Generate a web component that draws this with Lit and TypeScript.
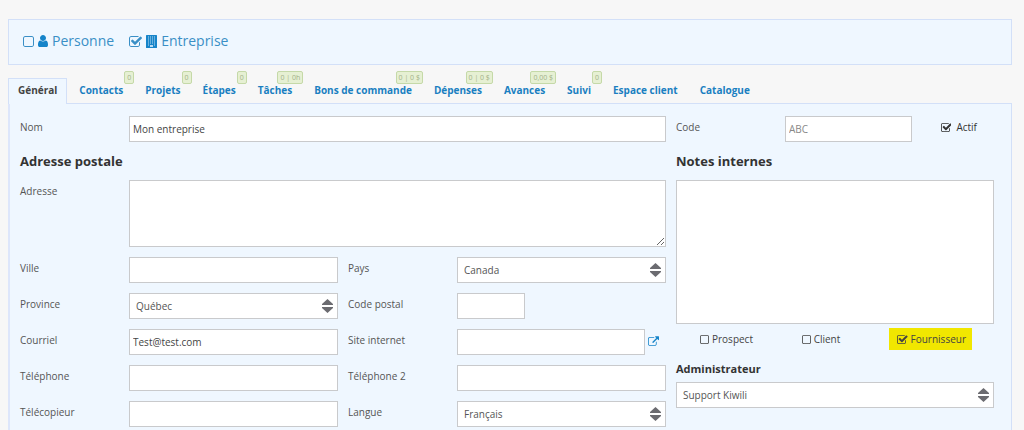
import { LitElement, html, css, svg, nothing } from "lit";
import { customElement, property } from "lit/decorators.js";

const PATHS = {
  square:
    "M1312 256h-832q-66 0-113 47t-47 113v832q0 66 47 113t113 47h832q66 0 113-47t47-113v-832q0-66-47-113t-113-47zm288 160v832q0 119-84.5 203.5t-203.5 84.5h-832q-119 0-203.5-84.5t-84.5-203.5v-832q0-119 84.5-203.5t203.5-84.5h832q119 0 203.5 84.5t84.5 203.5z",
  check:
    "M1472 930v318q0 119-84.5 203.5t-203.5 84.5h-832q-119 0-203.5-84.5t-84.5-203.5v-832q0-119 84.5-203.5t203.5-84.5h832q63 0 117 25 15 7 18 23 3 17-9 29l-49 49q-10 10-23 10-3 0-9-2-23-6-45-6h-832q-66 0-113 47t-47 113v832q0 66 47 113t113 47h832q66 0 113-47t47-113v-254q0-13 9-22l64-64q10-10 23-10 6 0 12 3 20 8 20 29zm231-489l-814 814q-24 24-57 24t-57-24l-430-430q-24-24-24-57t24-57l110-110q24-24 57-24t57 24l263 263 647-647q24-24 57-24t57 24l110 110q24 24 24 57t-24 57z",
  user:
    "M1536 1399q0 109-62.5 187t-150.5 78h-854q-88 0-150.5-78t-62.5-187q0-85 8.5-160.5t31.5-152 58.5-131 94-89 134.5-34.5q131 128 313 128t313-128q76 0 134.5 34.5t94 89 58.5 131 31.5 152 8.5 160.5zm-256-887q0 159-112.5 271.5t-271.5 112.5-271.5-112.5-112.5-271.5 112.5-271.5 271.5-112.5 271.5 112.5 112.5 271.5z",
  link:
    "M1408 928v320q0 119-84.5 203.5t-203.5 84.5h-832q-119 0-203.5-84.5t-84.5-203.5v-832q0-119 84.5-203.5t203.5-84.5h704q14 0 23 9t9 23v64q0 14-9 23t-23 9h-704q-66 0-113 47t-47 113v832q0 66 47 113t113 47h832q66 0 113-47t47-113v-320q0-14 9-23t23-9h64q14 0 23 9t9 23zm384-864v512q0 26-19 45t-45 19-45-19l-176-176-652 652q-10 10-23 10t-23-10l-114-114q-10-10-10-23t10-23l652-652-176-176q-19-19-19-45t19-45 45-19h512q26 0 45 19t19 45z",
};

const userIcon = html`<svg class="user" viewBox="256 128 1280 1536" aria-hidden="true"><path d=${PATHS.user} /></svg>`;

const buildingIcon = html`<svg class="building" viewBox="0 0 22 26" aria-hidden="true">
  <path d="M1 0H21Q22 0 22 1V25Q22 26 21 26H1Q0 26 0 25V1Q0 0 1 0Z" />
  ${[3, 7, 11, 15].map((y) =>
    [4, 8, 12, 16].map((x) => svg`<rect class="pane" x=${x} y=${y} width="2" height="2" />`)
  )}
  <rect class="pane" x="4" y="19" width="2" height="2" />
  <rect class="pane" x="16" y="19" width="2" height="2" />
  <rect class="pane" x="8" y="20" width="6" height="4" />
</svg>`;

const base = css`
  * {
    box-sizing: border-box;
  }
  svg {
    display: block;
    fill: currentColor;
    flex: none;
  }
`;

@customElement("check-option")
class CheckOption extends LitElement {
  @property({ type: Boolean, reflect: true }) checked = false;
  @property() label = "";
  @property() icon = "";

  static styles = [
    base,
    css`
      :host {
        display: inline-block;
      }
      label {
        display: flex;
        align-items: center;
        gap: var(--check-gap, 4px);
        white-space: nowrap;
      }
      .tick {
        position: relative;
        color: var(--check-color, inherit);
      }
      input {
        position: absolute;
        inset: 0;
        width: 100%;
        height: 100%;
        margin: 0;
        opacity: 0;
      }
      .tick svg {
        height: var(--check-size, 9px);
      }
      .user,
      .building {
        color: #1684c9;
      }
      .user {
        width: 10px;
        height: 12px;
      }
      .building {
        width: 11px;
        height: 13px;
      }
      .pane {
        fill: #b9dbf2;
      }
    `,
  ];

  toggle(e: Event) {
    this.checked = (e.target as HTMLInputElement).checked;
  }

  render() {
    const pic = this.icon === "user" ? userIcon : this.icon === "building" ? buildingIcon : nothing;
    return html`<label>
      <span class="tick">
        <input type="checkbox" .checked=${this.checked} @change=${this.toggle} />
        ${this.checked
          ? html`<svg viewBox="64 128 1664 1408"><path d=${PATHS.check} /></svg>`
          : html`<svg viewBox="192 128 1408 1408"><path d=${PATHS.square} /></svg>`}
      </span>
      ${pic}
      <span>${this.label}</span>
    </label>`;
  }
}

const TABS: [string, string][] = [
  ["Général", ""],
  ["Contacts", "0"],
  ["Projets", "0"],
  ["Étapes", "0"],
  ["Tâches", "0 | 0h"],
  ["Bons de commande", "0 | 0 $"],
  ["Dépenses", "0 | 0 $"],
  ["Avances", "0,00 $"],
  ["Suivi", "0"],
  ["Espace client", ""],
  ["Catalogue", ""],
];

@customElement("app-root")
class AppRoot extends LitElement {
  static styles = [
    base,
    css`
      :host {
        display: block;
        min-height: 100vh;
        padding: 19px 12px 0 8px;
        background: #f7f7f7;
        color: #555;
        font: 10px/22px "Open Sans", sans-serif;
      }
      .kind {
        display: flex;
        align-items: center;
        gap: 15px;
        height: 46px;
        padding: 0 14px 2px;
        border: 1px solid #d3e0f8;
        background: #eff7ff;
        color: #3a8fc6;
        font-size: 14px;
        --check-size: 11px;
      }
      .tabs {
        display: flex;
        gap: 2px;
        margin-top: 13px;
      }
      .tab {
        position: relative;
        padding: 0 9px 2px;
        border: 1px solid transparent;
        border-bottom: 0;
        color: #1a7fc1;
        font-weight: 700;
        text-decoration: none;
        white-space: nowrap;
      }
      .tab.active {
        z-index: 1;
        margin-bottom: -1px;
        padding-bottom: 3px;
        border-color: #d3e0f8;
        background: #eff7ff;
        color: #444;
      }
      .badge {
        position: absolute;
        top: -8px;
        right: -2px;
        height: 13px;
        padding: 0 2px;
        border: 1px solid #c5d9a8;
        border-radius: 2px;
        background: #e6f0d3;
        color: #a3b18a;
        font-size: 7px;
        font-weight: 400;
        line-height: 12px;
      }
      .panel {
        display: grid;
        grid-template-columns: repeat(3, minmax(0, 1fr));
        column-gap: 10px;
        min-height: calc(100vh - 103px);
        padding: 12px 17px 4px 10px;
        border: 1px solid #d3e0f8;
        border-left: 2px solid #dde6fb;
        border-bottom: 0;
        background: #eff7ff;
      }
      .main {
        grid-column: span 2;
        display: grid;
        grid-template-columns: repeat(2, minmax(0, 1fr));
        gap: 10px;
        align-content: start;
      }
      .side {
        display: flex;
        flex-direction: column;
        gap: 10px;
      }
      .wide {
        grid-column: 1 / -1;
      }
      .field {
        display: flex;
        align-items: flex-start;
      }
      .field > label {
        flex: 0 0 109px;
      }
      h2 {
        margin: 0;
        color: #333;
        font-size: 13px;
        font-weight: 700;
        line-height: 18px;
      }
      h3 {
        margin: 0;
        color: #333;
        font-size: 11px;
        font-weight: 700;
        line-height: 18px;
      }
      .box {
        display: block;
        flex: 1;
        width: 100%;
        min-width: 0;
        height: 26px;
        margin: 0;
        padding: 0 3px;
        border: 1px solid #c9cacc;
        border-radius: 0;
        background: #fff;
        color: #444;
        font: inherit;
        outline: 0;
      }
      .box::placeholder {
        color: #888;
        opacity: 1;
      }
      select.box {
        appearance: none;
        padding: 0 6px;
        color: #555;
      }
      .pick {
        position: relative;
        flex: 1;
      }
      .pick svg {
        position: absolute;
        top: 6px;
        right: 5px;
        width: 11px;
        height: 14px;
        color: #6b6b70;
        pointer-events: none;
      }
      .address {
        height: 67px;
      }
      .notes {
        flex: none;
        height: 144px;
        resize: none;
      }
      .short {
        flex: 0 0 68px;
      }
      .code {
        flex: 0 1 127px;
      }
      .active-flag {
        margin-left: auto;
        padding-right: 17px;
        color: #333;
        --check-gap: 5px;
      }
      .open {
        padding: 7px 7px 0 3px;
        color: #1684c9;
      }
      .open svg {
        width: 11px;
        height: 10px;
      }
      .roles {
        display: flex;
        justify-content: space-between;
        align-items: center;
        margin-top: -6px;
        padding: 0 22px 0 24px;
        color: #444;
        --check-gap: 3px;
      }
      .mark {
        padding: 0 6px 0 8px;
        background: #f1e700;
      }
      .admin {
        display: flex;
        flex-direction: column;
        gap: 4px;
      }
    `,
  ];

  text(id: string, label: string, value = "", extra = "") {
    return html`<div class="field">
      <label for=${id}>${label}</label>
      <input class="box ${extra}" id=${id} type="text" .value=${value} />
    </div>`;
  }

  pick(id: string, value: string) {
    return html`<div class="pick">
      <select class="box" id=${id}>
        <option>${value}</option>
      </select>
      <svg viewBox="0 0 11 14" aria-hidden="true"><path d="M5.5 0L11 5V6H0V5ZM0 8H11V9L5.5 14L0 9Z" /></svg>
    </div>`;
  }

  select(id: string, label: string, value: string) {
    return html`<div class="field"><label for=${id}>${label}</label>${this.pick(id, value)}</div>`;
  }

  render() {
    return html`
      <div class="kind">
        <check-option label="Personne" icon="user"></check-option>
        <check-option label="Entreprise" icon="building" checked></check-option>
      </div>
      <nav class="tabs">
        ${TABS.map(
          ([name, count], i) => html`<a class="tab ${i === 0 ? "active" : ""}" href="#"
            >${name}${count ? html`<span class="badge">${count}</span>` : nothing}</a
          >`
        )}
      </nav>
      <form class="panel">
        <div class="main">
          <div class="field wide">
            <label for="nom">Nom</label>
            <input class="box" id="nom" type="text" value="Mon entreprise" />
          </div>
          <h2 class="wide">Adresse postale</h2>
          <div class="field wide">
            <label for="adresse">Adresse</label>
            <textarea class="box address" id="adresse"></textarea>
          </div>
          ${this.text("ville", "Ville")} ${this.select("pays", "Pays", "Canada")}
          ${this.select("province", "Province", "Québec")}
          ${this.text("postal", "Code postal", "", "short")}
          ${this.text("courriel", "Courriel", "Test@test.com")}
          <div class="field">
            <label for="site">Site internet</label>
            <input class="box" id="site" type="text" />
            <a class="open" href="#" aria-label="Site internet">
              <svg viewBox="0 0 1792 1536"><path d=${PATHS.link} /></svg>
            </a>
          </div>
          ${this.text("tel", "Téléphone")} ${this.text("tel2", "Téléphone 2")}
          ${this.text("fax", "Télécopieur")} ${this.select("langue", "Langue", "Français")}
        </div>
        <div class="side">
          <div class="field">
            <label for="code">Code</label>
            <input class="box code" id="code" type="text" placeholder="ABC" />
            <check-option class="active-flag" label="Actif" checked></check-option>
          </div>
          <h2 id="notes-title">Notes internes</h2>
          <textarea class="box notes" aria-labelledby="notes-title"></textarea>
          <div class="roles">
            <check-option label="Prospect"></check-option>
            <check-option label="Client"></check-option>
            <check-option class="mark" label="Fournisseur" checked></check-option>
          </div>
          <div class="admin">
            <h3><label for="admin">Administrateur</label></h3>
            ${this.pick("admin", "Support Kiwili")}
          </div>
        </div>
      </form>
    `;
  }
}
